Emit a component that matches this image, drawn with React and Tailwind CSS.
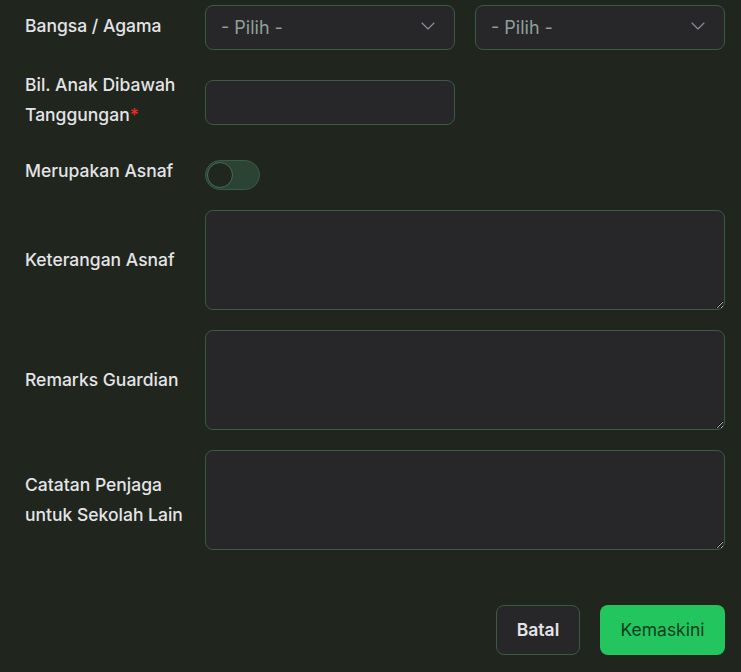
import React from "react";
import { ChevronDown } from "lucide-react";

const label = "w-[180px] shrink-0 text-[17.5px] leading-[30px] font-medium text-[#e4e4e7]";
const box = "rounded-[8px] border border-[#3b5a44] bg-[#27272a]";

function Select() {
  return (
    <div className={`${box} h-[45px] w-[250px] flex items-center justify-between pl-[15px] pr-[14px]`}>
      <span className="text-[18px] text-[#8fa096]">- Pilih -</span>
      <ChevronDown size={24} strokeWidth={1.1} className="text-[#8b929c] -mt-[4px]" />
    </div>
  );
}

function TextRow({ children }) {
  return (
    <div className="flex items-center mt-[20px]">
      <div className={label}>{children}</div>
      <textarea
        className={`${box} h-[100px] w-[520px] resize-y outline-none text-[#e4e4e7] p-2 [color-scheme:dark]`}
      />
    </div>
  );
}

export default function App() {
  return (
    <div
      className="w-[741px] h-[672px] bg-[#20261d] pl-[25px] pr-[16px] pt-[5px] overflow-hidden"
      style={{ fontFamily: "Inter, 'Noto Sans', sans-serif" }}
    >
      <div className="flex items-start">
        <div className={`${label} pt-[6px]`}>Bangsa / Agama</div>
        <div className="flex gap-[20px]">
          <Select />
          <Select />
        </div>
      </div>

      <div className="flex items-start mt-[20px]">
        <div className={label}>
          Bil. Anak Dibawah
          <br />
          Tanggungan<span className="text-[#ef2b2b]">*</span>
        </div>
        <div className={`${box} h-[45px] w-[250px] mt-[10px]`} />
      </div>

      <div className="flex items-start mt-[26px]">
        <div className={label}>Merupakan Asnaf</div>
        <div className="mt-[4px] h-[30px] w-[55px] rounded-full border border-[#3b5a44] bg-[#2a4333] flex items-center pl-[1px]">
          <div className="h-[26px] w-[26px] rounded-full border border-[#4c6b55] bg-[#1f271f]" />
        </div>
      </div>

      <TextRow>Keterangan Asnaf</TextRow>
      <TextRow>Remarks Guardian</TextRow>
      <TextRow>
        Catatan Penjaga
        <br />
        untuk Sekolah Lain
      </TextRow>

      <div className="flex justify-end gap-[20px] mt-[55px]">
        <button className="h-[50px] w-[84px] rounded-[8px] border border-[#3b5a44] bg-[#27272a] text-[17.5px] font-semibold text-[#e4e4e7]">
          Batal
        </button>
        <button className="h-[50px] w-[125px] rounded-[8px] bg-[#22c55e] text-[17.5px] text-[#0f3d1f]">
          Kemaskini
        </button>
      </div>
    </div>
  );
}
